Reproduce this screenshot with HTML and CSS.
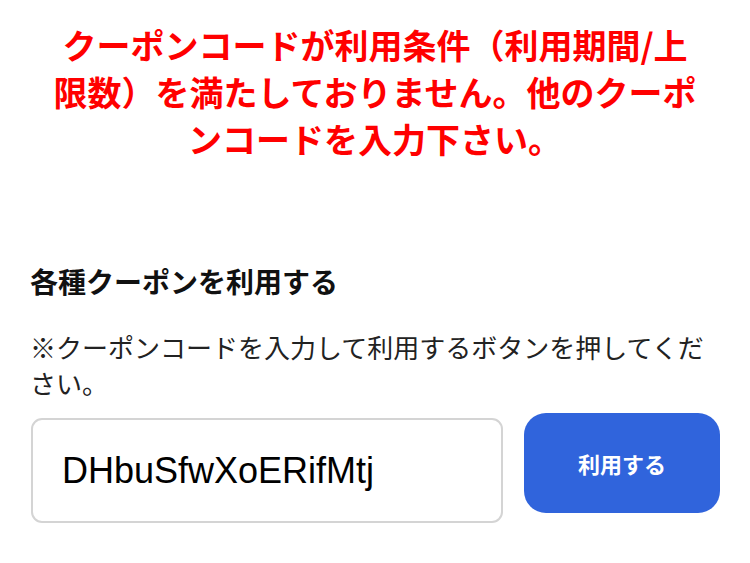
FILE: index.html
```html
<!DOCTYPE html>
<html lang="ja">
<head>
<meta charset="utf-8">
<title>クーポン</title>
<link rel="stylesheet" href="styles.css">
</head>
<body>
<div class="error">クーポンコードが利用条件（利用期間/上限数）を満たしておりません。他のクーポンコードを入力下さい。</div>
<section class="coupon">
  <h2 class="coupon-title">各種クーポンを利用する</h2>
  <p class="coupon-note">※クーポンコードを入力して利用するボタンを押してください。</p>
  <div class="coupon-row">
    <input class="coupon-input" type="text" value="DHbuSfwXoERifMtj">
    <button class="coupon-btn" type="button">利用する</button>
  </div>
</section>
</body>
</html>
```
FILE: styles.css
```css
html, body {
  margin: 0;
  padding: 0;
  background: #fff;
}
body {
  font-family: "Noto Sans CJK JP", "Noto Sans", sans-serif;
  color: #111;
}
.error {
  width: 654px;
  margin: 0 auto;
  padding-top: 21px;
  text-align: center;
  color: #ff0000;
  font-weight: 700;
  font-size: 34px;
  line-height: 47px;
}
.coupon {
  padding: 0 30px;
  margin-top: 99px;
}
.coupon-title {
  margin: 0;
  font-size: 28px;
  line-height: 40px;
  font-weight: 700;
  color: #111;
}
.coupon-note {
  margin: 28px 0 0;
  font-size: 26px;
  line-height: 36px;
  font-weight: 400;
  color: #222;
}
.coupon-row {
  display: flex;
  align-items: flex-start;
  gap: 21px;
  margin-top: 12px;
}
.coupon-input {
  box-sizing: border-box;
  width: 472px;
  height: 105px;
  margin: 5px 0 0 1px;
  padding: 0 0 0 29px;
  border: 2px solid #d4d4d4;
  border-radius: 11px;
  font-family: "Liberation Sans", Arial, sans-serif;
  font-size: 36px;
  color: #000;
  background: #fff;
  outline: none;
}
.coupon-btn {
  box-sizing: border-box;
  width: 197px;
  height: 100px;
  border: none;
  border-radius: 22px;
  background: #3064dc;
  color: #fff;
  font-family: "Noto Sans CJK JP", sans-serif;
  font-weight: 700;
  font-size: 22px;
  cursor: pointer;
}
```
